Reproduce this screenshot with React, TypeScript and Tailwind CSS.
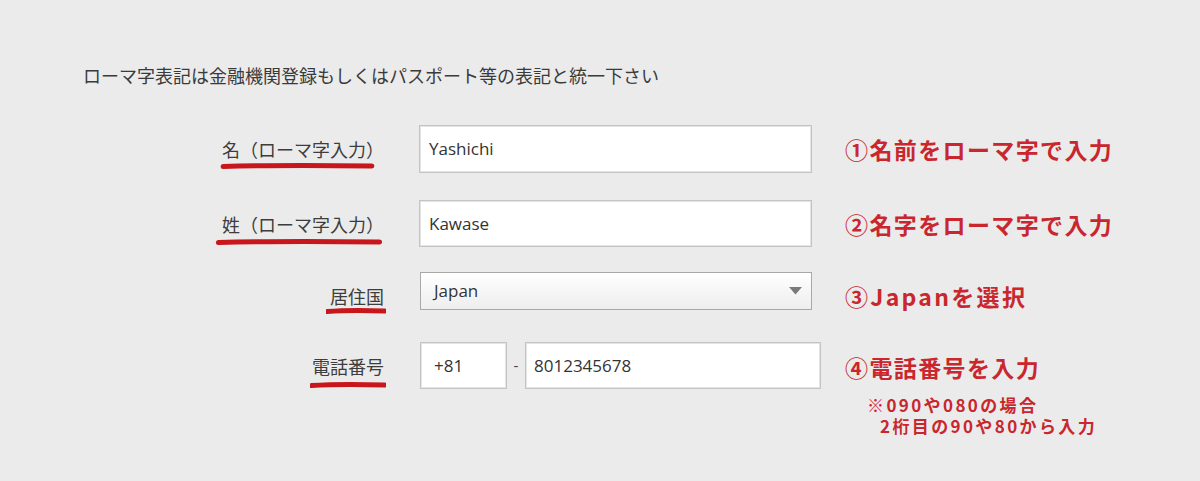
import React from "react";

const jp = "font-['Noto_Sans_CJK_JP','Noto_Sans',sans-serif]";
const latin = "font-['Open_Sans','Noto_Sans_CJK_JP',sans-serif]";

function Stroke({ left, right, top }: { left: number; right: number; top: number }) {
  // hand-drawn red marker line under a label
  return (
    <div className="absolute h-[8px]" style={{ left, right, top }}>
      <svg className="block w-full h-full" viewBox="0 0 100 8" preserveAspectRatio="none">
        <path
          d="M2 4.6 C 25 3.4, 60 3.2, 98 4"
          stroke="#c8161d"
          strokeWidth="5"
          strokeLinecap="round"
          fill="none"
          vectorEffect="non-scaling-stroke"
        />
      </svg>
    </div>
  );
}

function Label({
  text,
  left,
  right,
  top,
}: {
  text: string;
  left: number;
  right: number;
  top: number;
}) {
  return (
    <div className="w-[384px] flex justify-end">
      <span className={`relative text-[18px] leading-[24px] text-[#3d3d3d] ${jp}`}>
        {text}
        <Stroke left={left} right={right} top={top} />
      </span>
    </div>
  );
}

function Note({ children, wide }: { children: React.ReactNode; wide?: boolean }) {
  return (
    <div
      className={`text-[23px] leading-[30px] font-bold text-[#c9262d] ${
        wide ? "tracking-[0.1em]" : "tracking-[0.06em]"
      } ${jp}`}
    >
      {children}
    </div>
  );
}

const inputBox =
  "h-full bg-white border border-[#c4c4c4] shadow-[inset_0_0_0_1px_#e4e4e4] flex items-center text-[17px] text-[#333]";

export default function App() {
  return (
    <div className="w-[1200px] h-[481px] bg-[#ebebeb] overflow-hidden">
      <div className={`pt-[63px] pl-[83px] text-[18px] leading-[24px] text-[#3a3a3a] ${jp}`}>
        ローマ字表記は金融機関登録もしくはパスポート等の表記と統一下さい
      </div>

      <div className="mt-[38px] flex flex-col">
        {/* first name */}
        <div className="flex items-center h-[48px]">
          <Label text="名（ローマ字入力）" left={-2} right={9} top={25} />
          <div className="ml-[35px] w-[426px] h-full">
            <div className={`${inputBox} w-[393px] pl-[9px] ${latin}`}>Yashichi</div>
          </div>
          <Note>①名前をローマ字で入力</Note>
        </div>

        {/* last name */}
        <div className="flex items-center h-[47px] mt-[27px]">
          <Label text="姓（ローマ字入力）" left={-7} right={1} top={26} />
          <div className="ml-[35px] w-[426px] h-full">
            <div className={`${inputBox} w-[393px] pl-[9px] ${latin}`}>Kawase</div>
          </div>
          <Note>②名字をローマ字で入力</Note>
        </div>

        {/* country */}
        <div className="flex items-center h-[48px] mt-[25px]">
          <Label text="居住国" left={-4} right={-2} top={23} />
          <div className="ml-[36px] w-[425px] h-full">
            <div
              className={`h-[38px] w-[392px] border border-[#a8a8a8] bg-gradient-to-b from-white to-[#eeeeee] flex items-center justify-between pl-[13px] pr-[9px] text-[17px] text-[#333] ${latin}`}
            >
              <span>Japan</span>
              <svg width="13" height="8" viewBox="0 0 13 8">
                <path d="M0 0 H13 L6.5 7.5 Z" fill="#7a7a7a" />
              </svg>
            </div>
          </div>
          <Note wide>③Japanを選択</Note>
        </div>

        {/* phone */}
        <div className="flex items-start h-[47px] mt-[22px]">
          <div className="h-full flex items-center">
            <Label text="電話番号" left={-2} right={-2} top={27} />
          </div>
          <div className="ml-[36px] w-[425px] h-full flex items-center">
            <div className={`${inputBox} w-[87px] pl-[13px] ${latin}`}>+81</div>
            <span className={`w-[18px] text-center text-[15px] text-[#444] ${latin}`}>-</span>
            <div className={`${inputBox} w-[296px] pl-[8px] ${latin}`}>8012345678</div>
          </div>
          <div className="pt-[10px]">
            <Note>④電話番号を入力</Note>
            <div
              className={`mt-[12px] pl-[22px] text-[17px] leading-[21px] font-bold text-[#c9262d] tracking-[0.14em] ${jp}`}
            >
              <div>※090や080の場合</div>
              <div className="pl-[13px]">2桁目の90や80から入力</div>
            </div>
          </div>
        </div>
      </div>
    </div>
  );
}
